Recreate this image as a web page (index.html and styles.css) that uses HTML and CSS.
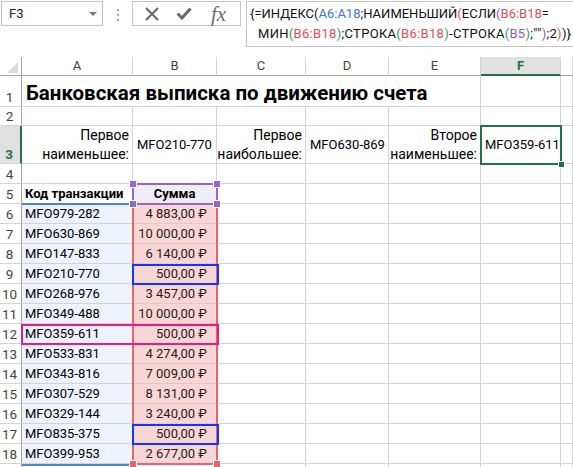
FILE: index.html
```html
<!DOCTYPE html>
<html lang="ru">
<head>
<meta charset="utf-8">
<link rel="stylesheet" href="styles.css">
</head>
<body>
<div class="bar">
  <div class="namebox"><span>F3</span><span class="nb-arrow"></span></div>
  <div class="grip"><i></i><i></i><i></i></div>
  <div class="tools">
    <svg class="ic-x" width="14" height="14" viewBox="0 0 14 14"><path d="M1 1L13 13M13 1L1 13" stroke="#6b6b6b" stroke-width="2.2" fill="none"/></svg>
    <svg class="ic-ok" width="16" height="13" viewBox="0 0 16 13"><path d="M1.5 6.5L6 11L14.5 1.5" stroke="#6b6b6b" stroke-width="3" fill="none"/></svg>
    <span class="ic-fx">fx</span>
  </div>
  <div class="fbox">
    <div class="fl">{=ИНДЕКС(<span class="cb">A6:A18</span>;НАИМЕНЬШИЙ<span class="cr">(</span>ЕСЛИ<span class="cp">(</span><span class="cr">B6:B18</span>=</div>
    <div class="fl fl2">МИН<span class="cg">(</span><span class="cr">B6:B18</span><span class="cg">)</span>;СТРОКА<span class="cg">(</span><span class="cr">B6:B18</span><span class="cg">)</span>-СТРОКА<span class="cg">(</span><span class="cp">B5</span><span class="cg">)</span>;""<span class="cp">)</span>;2<span class="cr">)</span>)}</div>
  </div>
</div>

<div class="sheet">
  <div class="row hdr">
    <div class="corner"><span class="tri"></span></div><div>A</div><div>B</div><div>C</div><div>D</div><div>E</div><div class="hsel">F</div><div></div>
  </div>
  <div class="row r1">
    <div class="rh">1</div><div class="title">Банковская выписка по движению счета</div><div></div><div></div>
  </div>
  <div class="row r2">
    <div class="rh">2</div><div></div><div></div><div></div><div></div><div></div><div></div><div></div>
  </div>
  <div class="row r3">
    <div class="rh rsel">3</div>
    <div class="rt">Первое<br>наименьшее:</div>
    <div class="mid">MFO210-770</div>
    <div class="rt">Первое<br>наибольшее:</div>
    <div class="mid">MFO630-869</div>
    <div class="rt">Второе<br>наименьшее:</div>
    <div class="mid">MFO359-611</div>
    <div></div>
  </div>
  <div class="row">
    <div class="rh">4</div><div></div><div></div><div></div><div></div><div></div><div></div><div></div>
  </div>
  <div class="row">
    <div class="rh">5</div><div class="b">Код транзакции</div><div class="b ctr sum">Сумма</div><div></div><div></div><div></div><div></div><div></div>
  </div>
  <div class="row"><div class="rh">6</div><div class="code">MFO979-282</div><div class="amt">4 883,00 ₽</div><div></div><div></div><div></div><div></div><div></div></div>
  <div class="row"><div class="rh">7</div><div class="code">MFO630-869</div><div class="amt">10 000,00 ₽</div><div></div><div></div><div></div><div></div><div></div></div>
  <div class="row"><div class="rh">8</div><div class="code">MFO147-833</div><div class="amt">6 140,00 ₽</div><div></div><div></div><div></div><div></div><div></div></div>
  <div class="row"><div class="rh">9</div><div class="code">MFO210-770</div><div class="amt">500,00 ₽</div><div></div><div></div><div></div><div></div><div></div></div>
  <div class="row"><div class="rh">10</div><div class="code">MFO268-976</div><div class="amt">3 457,00 ₽</div><div></div><div></div><div></div><div></div><div></div></div>
  <div class="row"><div class="rh">11</div><div class="code">MFO349-488</div><div class="amt">10 000,00 ₽</div><div></div><div></div><div></div><div></div><div></div></div>
  <div class="row"><div class="rh">12</div><div class="code">MFO359-611</div><div class="amt">500,00 ₽</div><div></div><div></div><div></div><div></div><div></div></div>
  <div class="row"><div class="rh">13</div><div class="code">MFO533-831</div><div class="amt">4 274,00 ₽</div><div></div><div></div><div></div><div></div><div></div></div>
  <div class="row"><div class="rh">14</div><div class="code">MFO343-816</div><div class="amt">7 009,00 ₽</div><div></div><div></div><div></div><div></div><div></div></div>
  <div class="row"><div class="rh">15</div><div class="code">MFO307-529</div><div class="amt">8 131,00 ₽</div><div></div><div></div><div></div><div></div><div></div></div>
  <div class="row"><div class="rh">16</div><div class="code">MFO329-144</div><div class="amt">3 240,00 ₽</div><div></div><div></div><div></div><div></div><div></div></div>
  <div class="row"><div class="rh">17</div><div class="code">MFO835-375</div><div class="amt">500,00 ₽</div><div></div><div></div><div></div><div></div><div></div></div>
  <div class="row"><div class="rh">18</div><div class="code">MFO399-953</div><div class="amt">2 677,00 ₽</div><div></div><div></div><div></div><div></div><div></div></div>
  <div class="row"><div class="rh"></div><div></div><div></div><div></div><div></div><div></div><div></div><div></div></div>

  <div class="ov range-a"></div>
  <div class="ov range-b"><span class="sq bl red"></span><span class="sq br red"></span></div>
  <div class="ov range-b5"><span class="sq tl"></span><span class="sq tr"></span><span class="sq bl"></span><span class="sq br"></span></div>
  <div class="ov box-b9"></div>
  <div class="ov box-r12"></div>
  <div class="ov box-b17"></div>
  <div class="ov sel"><span class="handle"></span></div>
</div>
</body>
</html>
```

FILE: styles.css
```css
* { box-sizing: border-box; margin: 0; padding: 0; }
html, body { width: 573px; height: 467px; overflow: hidden; background: #fff; }
body { font-family: Roboto, "Noto Sans", sans-serif; font-size: 13px; color: #000; }

/* formula bar */
.bar { display: flex; align-items: flex-start; height: 57px; padding: 1px 0 0 1px; }
.namebox { width: 102px; height: 25px; border: 1px solid #c6c6c6; display: flex; align-items: center; justify-content: space-between; padding: 0 5px 0 7px; font-size: 13px; color: #222; }
.nb-arrow { width: 0; height: 0; border-left: 4px solid transparent; border-right: 4px solid transparent; border-top: 4px solid #777; }
.grip { display: flex; flex-direction: column; gap: 3px; margin: 8px 0 0 14px; }
.grip i { display: block; width: 2px; height: 2px; background: #a6a6a6; }
.tools { margin-left: 13px; width: 109px; height: 25px; border: 1px solid #c6c6c6; display: flex; align-items: center; }
.ic-x { margin-left: 12px; }
.ic-ok { margin-left: 17px; }
.ic-fx { margin-left: 19px; font-family: "Liberation Serif", serif; font-style: italic; font-size: 21px; color: #6b6b6b; line-height: 20px; }
.fbox { margin-left: 5px; flex: 1; height: 46px; border: 1px solid #c6c6c6; border-right: none; padding: 2px 0 0 3px; font-size: 13px; line-height: 20px; color: #111; white-space: nowrap; }
.fl2 { padding-left: 8px; letter-spacing: 0.3px; }
.cb { color: #3f74d6; }
.cr { color: #e24d55; }
.cp { color: #8a5cc8; }
.cg { color: #2c9a55; }

/* sheet */
.sheet { position: relative; }
.row { display: grid; grid-template-columns: 22px 111px 84px 89px 83px 92px 80px 12px; height: 20px; }
.row > div { border-right: 1px solid #d4d4d4; border-bottom: 1px solid #d4d4d4; display: flex; align-items: flex-end; padding: 0 3px 1px; white-space: nowrap; line-height: 16px; overflow: hidden; }
.hdr { height: 19px; }
.hdr > div { justify-content: center; align-items: center; padding: 0; color: #444; border-bottom-color: #a6a6a6; }
.hdr > .hsel { background: #e1e1e1; color: #217346; font-weight: bold; border-bottom: 2px solid #217346; }
.corner { position: relative; border-right-color: #a6a6a6 !important; }
.tri { position: absolute; right: 3px; bottom: 2px; width: 0; height: 0; border-left: 11px solid transparent; border-bottom: 11px solid #dcdcdc; }
.row > .rh { justify-content: center; color: #444; border-right-color: #a6a6a6; padding: 0 2px 1px 0; font-size: 13.5px; }
.row > .rsel { background: #e1e1e1; color: #217346; font-weight: bold; border-right: 2px solid #217346; }

.r1 { height: 31px; grid-template-columns: 22px 459px 80px 12px; }
.row > .title { font-size: 20.5px; font-weight: bold; line-height: 24px; padding: 0 0 1px 4px; overflow: visible; }
.r2 { height: 19px; }
.r3 { height: 38px; }
.row > .rt { justify-content: flex-end; text-align: right; line-height: 19px; padding: 0 3px 0 0; align-items: center; font-size: 14px; }
.row > .mid { align-items: center; padding: 0 0 0 4px; }
.row > .b { font-weight: bold; }
.row > .ctr { justify-content: center; }
.row > .sum { background: #f0edf8; }
.row > .code { background: #edf2fb; }
.row > .amt { background: #f8d6d6; justify-content: flex-end; padding-right: 9px; color: #2a1a1a; border-bottom-color: #e8c4c4; }

/* overlays */
.ov { position: absolute; pointer-events: none; }
.range-a { left: 22px; top: 146px; width: 110px; height: 263px; border-top: 2px solid #4f82d9; border-bottom: 2px solid #4f82d9; }
.range-b { left: 132px; top: 147px; width: 86px; height: 261px; border: 2px solid #e86468; border-top: none; }
.range-b5 { left: 132px; top: 126px; width: 86px; height: 22px; border: 2px solid #9466cc; }
.sq { position: absolute; width: 6px; height: 6px; background: #9466cc; border: 1px solid #fff; box-sizing: content-box; }
.sq.red { background: #e86468; }
.tl { left: -5px; top: -5px; }
.tr { right: -5px; top: -5px; }
.bl { left: -5px; bottom: -5px; }
.br { right: -5px; bottom: -5px; }
.box-b9 { left: 132px; top: 207px; width: 87px; height: 21px; border: 2px solid #1634ff; }
.box-b17 { left: 132px; top: 367px; width: 87px; height: 21px; border: 2px solid #1634ff; }
.box-r12 { left: 21px; top: 267px; width: 198px; height: 21px; border: 2px solid #ea1a82; }
.sel { left: 480px; top: 68px; width: 82px; height: 40px; border: 2px solid #217346; }
.handle { position: absolute; right: -5px; bottom: -5px; width: 5px; height: 5px; background: #217346; border: 1px solid #fff; box-sizing: content-box; }
```
